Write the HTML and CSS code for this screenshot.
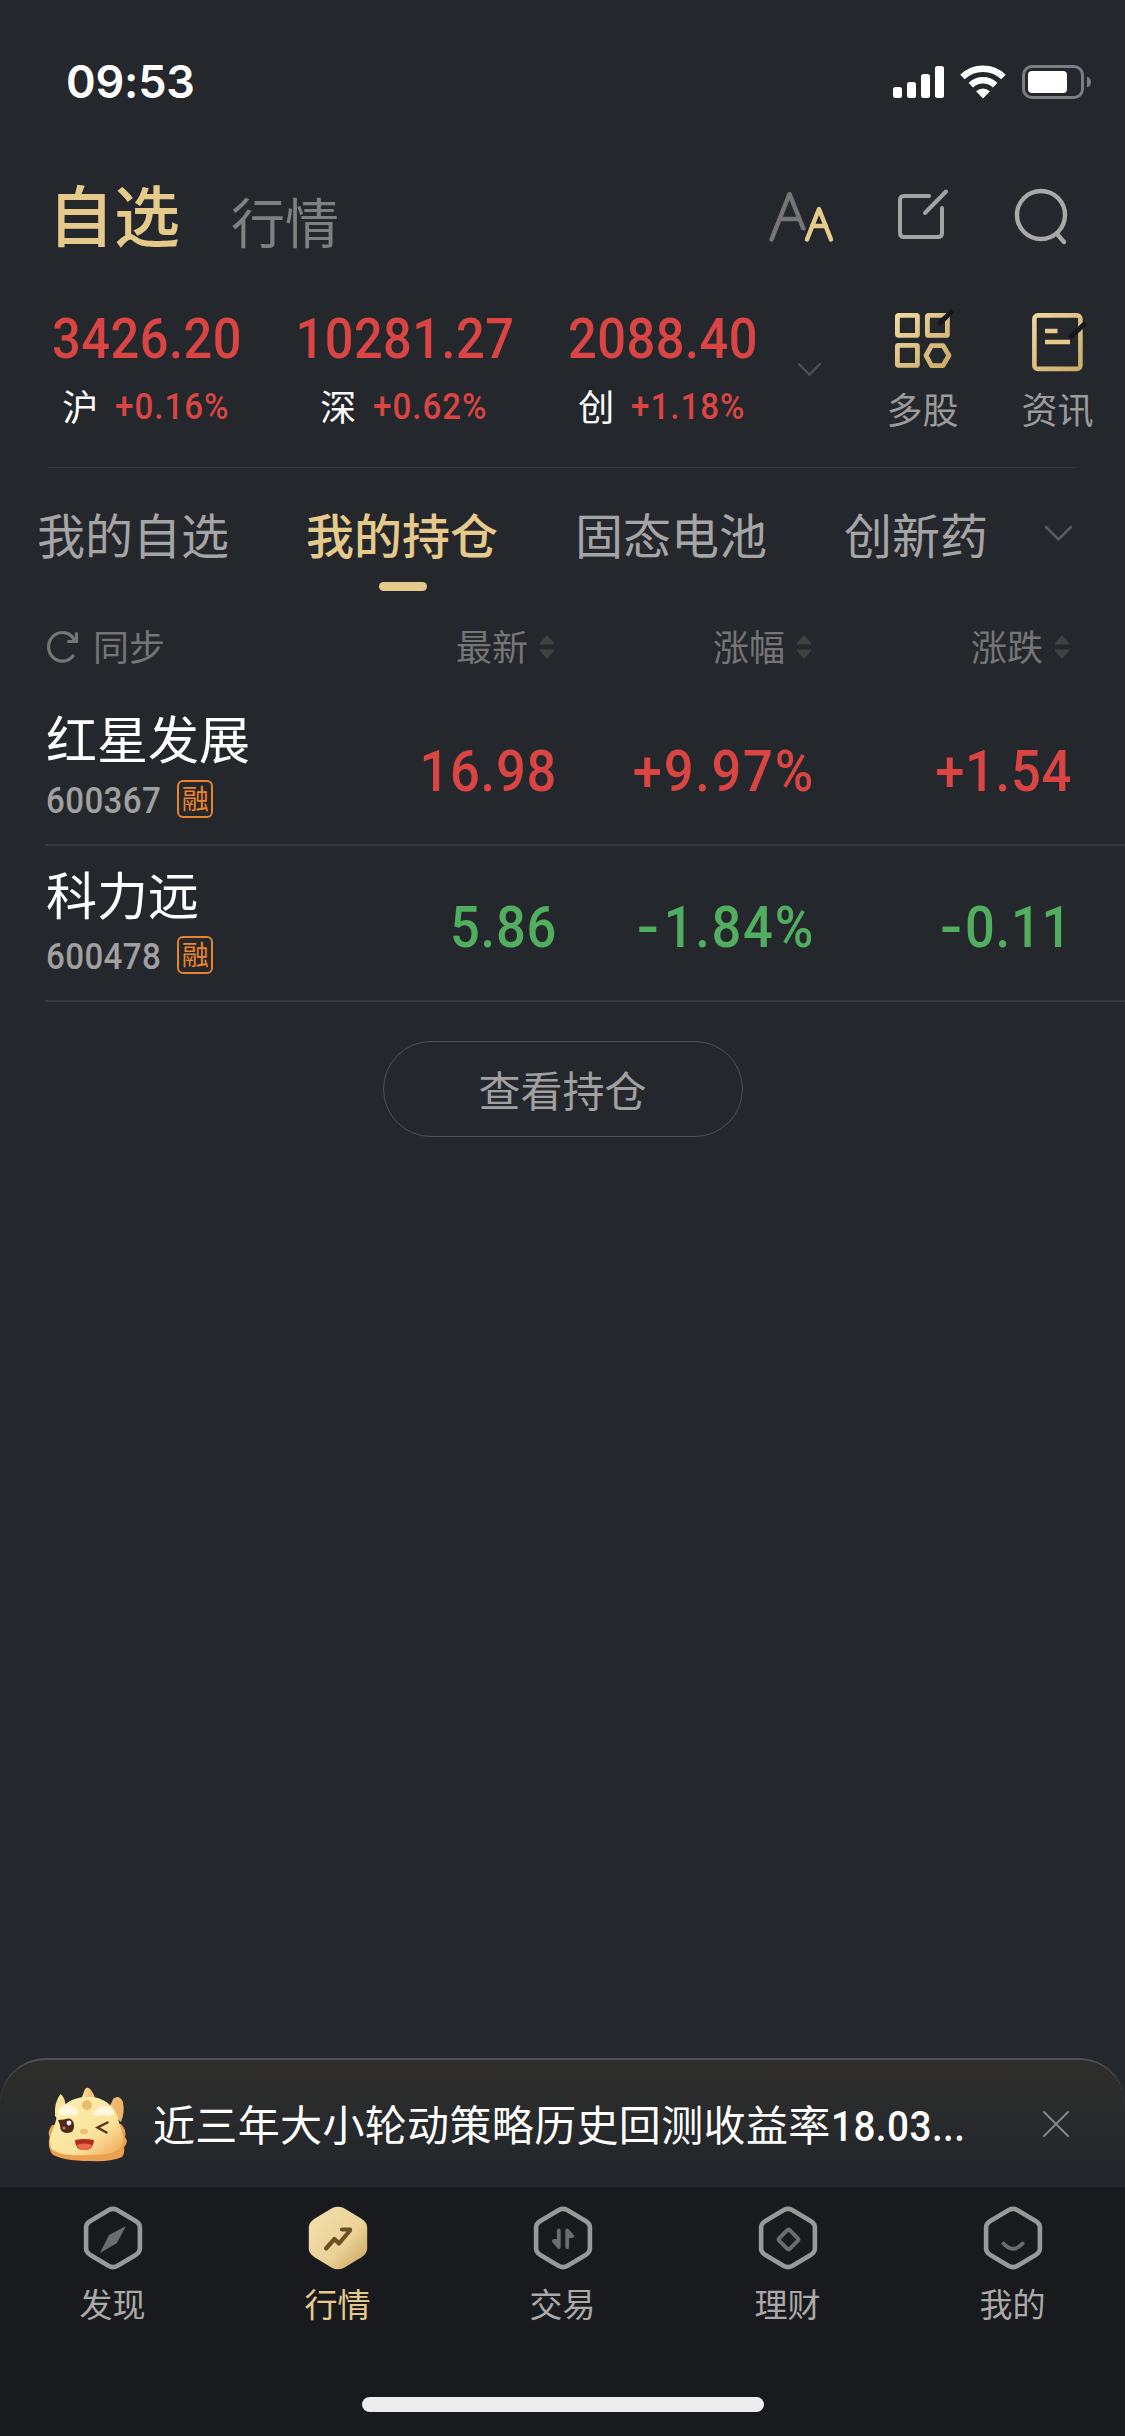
FILE: index.html
```html
<!DOCTYPE html>
<html lang="zh-CN">
<head>
<meta charset="utf-8">
<title>自选</title>
<link rel="stylesheet" href="styles.css">
</head>
<body>
<div class="app">
  <div class="status">
    <span class="clock">09:53</span>
    <svg class="status-icons" width="199" height="36" viewBox="0 0 199 36">
      <g fill="#fff">
        <rect x="0" y="22" width="9" height="11" rx="2.5"/><rect x="14" y="17" width="9" height="16" rx="2.5"/><rect x="28" y="9" width="9" height="24" rx="2.5"/><rect x="42" y="1" width="9" height="32" rx="2.5"/>
        <path d="M90 33.5 L83 26.3 Q90 20.5 97 26.3Z"/>
      </g>
      <g fill="none" stroke="#fff" stroke-width="6.4">
        <path d="M69.500 12 A29.500 29.500 0 0 1 110.500 12"/><path d="M77.800 20.200 A17.600 17.600 0 0 1 102.200 20.200"/>
      </g>
      <rect x="130.500" y="1.500" width="59" height="31" rx="8.500" fill="none" stroke="#7c7e81" stroke-width="3"/>
      <rect x="135" y="6" width="39" height="22" rx="4" fill="#fff"/>
      <path d="M194 11.500 Q198 13 198 17 Q198 21 194 22.500Z" fill="#7c7e81"/>
    </svg>
  </div>

  <header class="header">
    <h1 class="title">自选</h1>
    <span class="title-alt">行情</span>
    <div class="tools">
      <svg width="66" height="52" viewBox="0 0 66 52" fill="none" stroke-linecap="round" stroke-linejoin="round" stroke-width="4.500">
        <path d="M2.500 48.500 L20.500 3 L34.500 38 M10.500 28 H30" stroke="#757575"/>
        <path d="M34 42 L29 54" stroke="#24272c" stroke-width="6"/>
        <path d="M38 48.500 L50 18 L62 48.500 M43 35 H57" stroke="#e6ca8b"/>
      </svg>
      <svg width="52" height="52" viewBox="0 0 52 52" fill="none" stroke="#a3a3a3" stroke-width="4" stroke-linecap="round">
        <path d="M32 8 H7 Q3 8 3 12 V45 Q3 49 7 49 H41 Q45 49 45 45 V20"/><path d="M28 25 L49 3.500"/>
      </svg>
      <svg width="56" height="58" viewBox="0 0 56 58" fill="none" stroke="#a9a9a9" stroke-width="4.400" stroke-linecap="round">
        <circle cx="27" cy="28" r="24"/><path d="M43 47 L50 55"/>
      </svg>
    </div>
  </header>

  <section class="indices">
    <div class="index"><b class="num">3426.20</b><p><i>沪</i><span class="num">+0.16%</span></p></div>
    <div class="index"><b class="num">10281.27</b><p><i>深</i><span class="num">+0.62%</span></p></div>
    <div class="index"><b class="num">2088.40</b><p><i>创</i><span class="num">+1.18%</span></p></div>
    <svg class="chev-sm" width="25" height="15" viewBox="0 0 25 15" fill="none" stroke="#4d5053" stroke-width="2.400" stroke-linecap="round"><path d="M2 2 L12.500 12.500 L23 2"/></svg>
    <div class="shortcut">
      <svg width="64" height="64" viewBox="0 0 64 64" fill="none">
        <defs><linearGradient id="gold" gradientUnits="userSpaceOnUse" x1="4" y1="4" x2="60" y2="60"><stop offset="0" stop-color="#f1d9a2"/><stop offset="1" stop-color="#c9a965"/></linearGradient></defs>
        <g stroke="url(#gold)" stroke-width="4.800" stroke-linejoin="round">
          <rect x="6.400" y="5.400" width="20" height="20" rx="1"/><rect x="36.400" y="5.400" width="20" height="20" rx="1"/><rect x="6.400" y="35.400" width="20" height="20" rx="1"/>
          <path d="M40.500 35.600 H52 L58 45.600 L52 55.600 H40.500 L35 45.600Z"/>
        </g>
        <path d="M47.500 14.500 L61.500 0.500" stroke="#15171a" stroke-width="5"/>
      </svg>
      <span>多股</span>
    </div>
    <div class="shortcut">
      <svg width="64" height="64" viewBox="0 0 64 64" fill="none">
        <rect x="8.400" y="5.400" width="46" height="53.500" rx="3.500" stroke="url(#gold)" stroke-width="4.600"/>
        <path d="M19 21 H31.500 M19 32 H44" stroke="#e6ca8b" stroke-width="4.600"/>
        <path d="M43.500 28 L59.500 13" stroke="#15171a" stroke-width="5"/>
      </svg>
      <span>资讯</span>
    </div>
  </section>

  <nav class="tabs">
    <span>我的自选</span><span class="on">我的持仓</span><span>固态电池</span><span>创新药</span>
    <svg width="29" height="17" viewBox="0 0 29 17" fill="none" stroke="#595b5d" stroke-width="2.600" stroke-linecap="round"><path d="M2 2 L14.500 14.500 L27 2"/></svg>
  </nav>

  <div class="grid head">
    <div class="sync">
      <svg width="32" height="34" viewBox="0 0 32 34" fill="none" stroke="#757575" stroke-width="3.200" stroke-linecap="round"><path d="M26 26 A13.800 14.300 0 1 1 27.500 10"/><path d="M29.500 3.500 V11.500 H21.500"/></svg>
      <span>同步</span>
    </div>
    <div class="sort">最新<svg width="14" height="24" viewBox="0 0 14 24" fill="#404143"><path d="M7 0 L14 8 V9.500 H0 V8Z M0 14.500 H14 V16 L7 24 L0 16Z"/></svg></div>
    <div class="sort">涨幅<svg width="14" height="24" viewBox="0 0 14 24" fill="#404143"><path d="M7 0 L14 8 V9.500 H0 V8Z M0 14.500 H14 V16 L7 24 L0 16Z"/></svg></div>
    <div class="sort">涨跌<svg width="14" height="24" viewBox="0 0 14 24" fill="#404143"><path d="M7 0 L14 8 V9.500 H0 V8Z M0 14.500 H14 V16 L7 24 L0 16Z"/></svg></div>
  </div>

  <div class="grid row up">
    <div class="stock"><strong>红星发展</strong><p><span class="num">600367</span><em>融</em></p></div>
    <div class="num val">16.98</div><div class="num val pct">+9.97%</div><div class="num val">+1.54</div>
  </div>
  <div class="grid row down">
    <div class="stock"><strong>科力远</strong><p><span class="num">600478</span><em>融</em></p></div>
    <div class="num val">5.86</div><div class="num val pct"><span class="minus">-</span>1.84%</div><div class="num val"><span class="minus">-</span>0.11</div>
  </div>

  <button class="more">查看持仓</button>

  <div class="banner">
    <svg class="mascot" width="80" height="78" viewBox="0 0 80 78">
      <defs>
        <linearGradient id="skin" x1="0" y1="0" x2="1" y2="1"><stop offset="0" stop-color="#fdf0b4"/><stop offset=".65" stop-color="#fbe29b"/><stop offset="1" stop-color="#eda654"/></linearGradient>
        <linearGradient id="horn" x1="0" y1="0" x2="1" y2="0"><stop offset="0" stop-color="#fbe6a0"/><stop offset="1" stop-color="#eeb266"/></linearGradient>
      </defs>
      <path d="M7 28 Q6 14 12.500 6 Q17 9 18 19 L22 21 L11 32Z M58 21 Q63 18 65 11 Q71 6 75 14 Q77 24 73 34Z" fill="url(#horn)"/>
      <path d="M4 37 Q-1 44 1.500 49 Q-1 58 4 66 Q14 73 42 73 Q64 74 74 69 Q77 65 76 59 Q81 54 77 49 Q79 42 73 36Z" fill="#eca051"/>
      <path d="M32 13 Q35 7 37 1 Q40 -2 43 2 Q47 7 48 13 L40 17Z" fill="url(#horn)"/>
      <path d="M40 9 C56 8 68 19 71 34 C73 42 77 49 74 57 C70 66 55 67 40 67 C20 68 8 66 3 60 C-1 49 6 42 8 32 C11 17 24 9 40 9Z" fill="url(#skin)"/>
      <ellipse cx="39" cy="17" rx="5" ry="5" fill="#eabc70"/>
      <path d="M10 23 Q13 16 20 17 Q29 18 30 25 Q29 28 20 27 Q9 28 10 23Z M45 25 Q50 18 58 18 Q67 19 66 26 Q62 29 56 27 Q46 29 45 25Z" fill="#fff8dc"/>
      <path d="M10 32 L16 31.500 Q24 28 26 36 Q27 45 19 45 Q12 45 12 37Z" fill="#522719"/>
      <circle cx="21" cy="35" r="2.400" fill="#fff"/><circle cx="16" cy="40" r="1.500" fill="#b7856d"/>
      <path d="M59.500 34.500 L49.500 39.500 L58.500 44.500" fill="none" stroke="#5a3218" stroke-width="2.400" stroke-linecap="round"/>
      <ellipse cx="36" cy="43.500" rx="4" ry="2.800" fill="#f0bd73"/>
      <path d="M27 52 Q36 50 46 52 Q46 62 36 62 Q27 62 27 52Z" fill="#b52a20"/><path d="M28.500 57 Q36 54 44.500 57 Q42 62 36 62 Q31 62 28.500 57Z" fill="#e76b49"/>
    </svg>
    <p>近三年大小轮动策略历史回测收益率<span class="num">18.03...</span></p>
    <svg class="close" width="28" height="28" viewBox="0 0 28 28" stroke="#858585" stroke-width="2" stroke-linecap="round"><path d="M2 2 L26 26 M26 2 L2 26"/></svg>
  </div>

  <footer class="tabbar">
    <a><svg class="hex" width="60" height="66" viewBox="0 0 60 66"><path class="ring" d="M25.800 5 Q30 2.800 34.200 5 L52.200 15.800 Q56.900 18.500 56.900 22.500 V43.500 Q56.900 47.500 52.200 50.200 L34.200 61 Q30 63.200 25.800 61 L7.800 50.200 Q3.100 47.500 3.100 43.500 V22.500 Q3.100 18.500 7.800 15.800Z"/><path d="M43 21 L34 38 L17 48 L26 30Z" fill="#6c6c6c"/></svg>发现</a>
    <a class="on"><svg class="hex" width="60" height="66" viewBox="0 0 60 66"><path d="M24.700 2.800 Q30 0.500 35.300 2.800 L53.500 13.800 Q59.200 17.500 59.200 22.500 V43.500 Q59.200 48.500 53.500 52.200 L35.300 63.200 Q30 65.500 24.700 63.200 L6.500 52.200 Q0.800 48.500 0.800 43.500 V22.500 Q0.800 17.500 6.500 13.800Z" fill="url(#tile)"/><defs><linearGradient id="tile" x1="0" y1="0" x2="1" y2="1"><stop offset=".2" stop-color="#f1dba6"/><stop offset=".6" stop-color="#ebd296"/><stop offset="1" stop-color="#c3a05c"/></linearGradient></defs><path d="M18 43.500 L26.500 34 L31 38.500 L42 25.500 M34 24.500 H42" fill="none" stroke="#6a5023" stroke-width="4.200" stroke-linecap="round" stroke-linejoin="round"/></svg>行情</a>
    <a><svg class="hex" width="60" height="66" viewBox="0 0 60 66"><path class="ring" d="M25.800 5 Q30 2.800 34.200 5 L52.200 15.800 Q56.900 18.500 56.900 22.500 V43.500 Q56.900 47.500 52.200 50.200 L34.200 61 Q30 63.200 25.800 61 L7.800 50.200 Q3.100 47.500 3.100 43.500 V22.500 Q3.100 18.500 7.800 15.800Z"/><path d="M25.800 25.500 V42 L20.800 36 H25.800 M34.200 42 V25.500 L39.200 31 H34.200" fill="#6c6c6c" stroke="#6c6c6c" stroke-width="3.800" stroke-linecap="round" stroke-linejoin="round"/></svg>交易</a>
    <a><svg class="hex" width="60" height="66" viewBox="0 0 60 66"><path class="ring" d="M25.800 5 Q30 2.800 34.200 5 L52.200 15.800 Q56.900 18.500 56.900 22.500 V43.500 Q56.900 47.500 52.200 50.200 L34.200 61 Q30 63.200 25.800 61 L7.800 50.200 Q3.100 47.500 3.100 43.500 V22.500 Q3.100 18.500 7.800 15.800Z"/><rect x="23" y="27" width="15" height="15" rx="2" transform="rotate(45 30.500 34.500)" fill="none" stroke="#6c6c6c" stroke-width="4"/></svg>理财</a>
    <a><svg class="hex" width="60" height="66" viewBox="0 0 60 66"><path class="ring" d="M25.800 5 Q30 2.800 34.200 5 L52.200 15.800 Q56.900 18.500 56.900 22.500 V43.500 Q56.900 47.500 52.200 50.200 L34.200 61 Q30 63.200 25.800 61 L7.800 50.200 Q3.100 47.500 3.100 43.500 V22.500 Q3.100 18.500 7.800 15.800Z"/><path d="M20.500 38.500 Q30 49 39.500 38.500" fill="none" stroke="#6c6c6c" stroke-width="4" stroke-linecap="round"/></svg>我的</a>
  </footer>
  <div class="home"><i></i></div>
</div>
</body>
</html>
```
FILE: styles.css
```css
* { box-sizing: border-box; margin: 0; padding: 0; }
body {
  background: #24272c;
  color: #fff;
  font-family: "Noto Sans CJK SC", sans-serif;
}
svg { display: block; flex: none; overflow: visible; }
i, em { font-style: normal; }

/* Narrow figures with open tracking */
.num {
  display: inline-block;
  font-family: Roboto, "Noto Sans CJK SC", sans-serif;
  font-weight: 500;
  transform: scaleX(0.92);
  transform-origin: left;
}

.app { width: 1125px; height: 2436px; display: flex; flex-direction: column; overflow: hidden; }

.status {
  height: 132px; flex: none;
  display: flex; justify-content: space-between; align-items: flex-start;
  padding: 65px 33px 0 66px;
}
.clock { font: 600 45px/34px Inter, sans-serif; letter-spacing: -0.2px; }

.header { height: 168px; flex: none; display: flex; align-items: flex-start; padding: 0 55px 0 48px; }
.title { font-size: 66px; line-height: 80px; font-weight: 500; color: #e6ca8b; padding-top: 40px; }
.title-alt { font-size: 54px; line-height: 66px; color: #808080; margin-left: 51px; padding-top: 56px; }
.tools { display: flex; align-items: flex-start; margin-left: auto; padding-top: 55px; }
.tools svg:nth-child(1) { margin: 4px 62px 0 0; }
.tools svg:nth-child(2) { margin: 1px 65px 0 0; }

.indices {
  height: 168px; flex: none;
  display: flex; align-items: flex-start;
  margin: 0 48px; padding-top: 10px;
  border-bottom: 1px solid #34373a;
}
.index { width: 258px; flex: none; text-align: center; }
.index:first-child { margin-left: -30px; }
.index b { display: block; font-size: 55px; line-height: 56px; letter-spacing: 0.5px; color: #da4543; transform-origin: center; margin-top: 1px; }
.index p { display: flex; justify-content: center; align-items: center; gap: 17px; height: 44px; margin-top: 16px; }
.index i { font-size: 36px; line-height: 44px; }
.index span { font-size: 36px; line-height: 44px; letter-spacing: 1.1px; color: #da4543; margin-right: -8px; padding-top: 3px; }
.chev-sm { margin: 52px 34px 0 5px; }
.shortcut { width: 135px; flex: none; display: flex; flex-direction: column; align-items: center; font-size: 36px; line-height: 44px; color: #9b9b9b; margin-left: -1px; margin-right: 1px; }
.shortcut svg { margin-bottom: 12px; }

.tabs { height: 150px; flex: none; display: flex; align-items: flex-start; padding: 32px 0 0 37px; gap: 77px; font-size: 48px; line-height: 66px; color: #a5a5a5; white-space: nowrap; }
.tabs .on { color: #e6ca8b; font-weight: 500; display: flex; flex-direction: column; align-items: center; }
.tabs .on::after { content: ""; width: 48px; height: 9px; border-radius: 4.5px; background: #e6ca8b; margin: 16px 0 0 1px; }
.tabs svg { margin: 25px 0 0 -21px; }

.grid { display: grid; grid-template-columns: 277px 233px 257px 258px; flex: none; }
.head { height: 72px; padding: 0 0 18px 46px; align-items: center; color: #757575; font-size: 36px; line-height: 44px; }
.sync { display: flex; align-items: center; gap: 14px; padding-left: 1px; }
.sync svg { margin-top: 3px; }
.sort { display: flex; justify-content: flex-end; align-items: center; gap: 12px; padding-right: 2px; }
.sort svg { margin-top: 4px; }
.row { height: 156px; margin-left: 45px; padding-left: 1px; border-bottom: 2px solid #34393c; }
.stock strong { display: block; font-size: 51px; line-height: 60px; font-weight: 400; padding-top: 17px; height: 77px; }
.stock p { display: flex; align-items: center; height: 36px; gap: 6px; margin-top: 14px; }
.stock .num { font-size: 36px; line-height: 36px; letter-spacing: 0.4px; color: #a0a0a0; padding-top: 4px; }
.stock em { width: 36px; height: 38px; border: 2px solid #e8842b; border-radius: 6px; color: #f0852b; font-size: 27px; line-height: 32px; display: flex; justify-content: center; }
.val { font-size: 57px; line-height: 60px; letter-spacing: 0.8px; text-align: right; padding-top: 52px; transform-origin: right; white-space: nowrap; margin-right: -1px; }
.pct { letter-spacing: 1.9px; margin-right: -2px; }
.minus { display: inline-block; transform: scaleX(1.25); margin: 0 5px 0 0; }
.up .val { color: #da4543; }
.down .val { color: #52ae5f; }

.more { align-self: center; flex: none; margin-top: 39px; width: 360px; height: 96px; border: 1px solid #505255; border-radius: 48px; background: none; color: #a0a0a0; font: 400 42px/60px "Noto Sans CJK SC", sans-serif; }

.banner { margin-top: auto; height: 129px; flex: none; display: flex; align-items: flex-start; padding: 28px 55px 0 48px; border: solid #505152; border-width: 2px 0 0; border-radius: 46px 46px 0 0; background: linear-gradient(#2f2e2c, #23272b 85%); }
.banner p { font-size: 42px; line-height: 60px; letter-spacing: 0.35px; margin: 5px 0 0 25px; white-space: nowrap; }
.banner .num { letter-spacing: 0.5px; }
.close { margin: 22px 0 0 auto; }

.tabbar { height: 180px; flex: none; display: grid; grid-template-columns: repeat(5, 1fr); background: #191a1d; padding-top: 18px; }
.tabbar a { display: flex; flex-direction: column; align-items: center; font-size: 33px; line-height: 40px; color: #aaa; }
.tabbar .on { color: #e6ca8b; }
.hex { margin-bottom: 12px; }
.ring { fill: none; stroke: #999; stroke-width: 4.6; }
.home { height: 69px; flex: none; background: #191a1d; padding-top: 30px; display: flex; justify-content: center; align-items: flex-start; }
.home i { width: 402px; height: 15px; border-radius: 8px; background: #ececec; }
```
